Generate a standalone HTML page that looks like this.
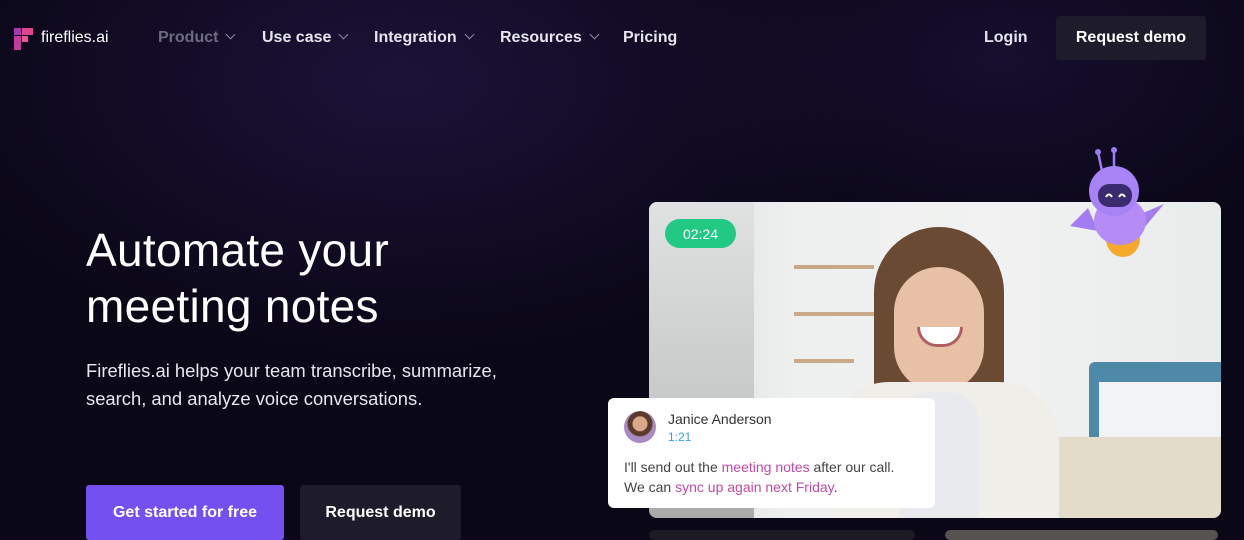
<!DOCTYPE html>
<html><head><meta charset="utf-8"><style>
*{margin:0;padding:0;box-sizing:border-box}
body{width:1244px;height:537px;overflow:hidden;background:#0c0818;font-family:"Liberation Sans",sans-serif;position:relative}
.bg{position:absolute;inset:0;background:radial-gradient(ellipse 700px 400px at 400px 80px,#1c1238 0%,rgba(20,12,40,0) 70%),radial-gradient(ellipse 500px 300px at 1000px 60px,#160e2e 0%,rgba(0,0,0,0) 70%),#0a0716}
.nav{position:absolute;top:0;left:0;right:0;height:76px}
.nav span{position:absolute;top:29px;font-size:16px;color:#e6e4ee;font-weight:bold}
.chev{display:inline-block;width:7px;height:7px;border-right:1.3px solid #8d8a9e;border-bottom:1.3px solid #8d8a9e;transform:rotate(45deg);margin-left:9px;position:relative;top:-4px}
.btn{position:absolute;display:flex;align-items:center;justify-content:center;color:#fff;font-size:16px;font-weight:bold}
.photo{position:absolute;left:649px;top:202px;width:572px;height:316px;border-radius:8px;overflow:hidden;background:linear-gradient(90deg,#d9dcdc 0%,#eef0ef 25%,#f1f2f1 60%,#e9ecec 100%)}
</style></head><body>
<div class="bg"></div>
<div class="nav">
<svg style="position:absolute;left:14px;top:28px" width="20" height="22" viewBox="0 0 20 22"><rect x="0" y="0" width="7" height="7" fill="#a53ab0"/><rect x="8" y="0" width="11" height="7" fill="#e0448a"/><rect x="0" y="8" width="7" height="14" fill="#c23b9e"/><rect x="8" y="8" width="6" height="6" fill="#f0508e"/></svg>
<span style="left:41px;font-weight:normal;color:#fff;font-size:16px">fireflies.ai</span>
<span style="left:158px;color:#6e6a80">Product<i class="chev"></i></span>
<span style="left:262px">Use case<i class="chev"></i></span>
<span style="left:374px">Integration<i class="chev"></i></span>
<span style="left:500px">Resources<i class="chev"></i></span>
<span style="left:623px">Pricing</span>
<span style="left:984px">Login</span>
</div>
<div class="btn" style="left:1056px;top:16px;width:150px;height:44px;background:#1e1b2b;border-radius:3px">Request demo</div>
<div style="position:absolute;left:86px;top:222px;color:#fff;font-size:46px;line-height:56px;letter-spacing:0.3px">Automate your<br>meeting notes</div>
<div style="position:absolute;left:86px;top:357px;color:#e8e6ef;font-size:18.4px;line-height:28px">Fireflies.ai helps your team transcribe, summarize,<br>search, and analyze voice conversations.</div>
<div class="btn" style="left:86px;top:485px;width:198px;height:55px;background:#7450f0;border-radius:3px">Get started for free</div>
<div class="btn" style="left:300px;top:485px;width:161px;height:55px;background:#1e1b2b;border-radius:3px">Request demo</div>

<div class="photo">
 <div style="position:absolute;left:0;top:0;width:105px;height:316px;background:linear-gradient(180deg,#e0e2e2,#c9cbcb 60%,#a8a9a6)"></div>
 <div style="position:absolute;left:145px;top:63px;width:80px;height:4px;background:#c8aa88"></div>
 <div style="position:absolute;left:145px;top:110px;width:80px;height:4px;background:#c8aa88"></div>
 <div style="position:absolute;left:145px;top:157px;width:60px;height:4px;background:#c8aa88"></div>
 <div style="position:absolute;left:440px;top:160px;width:132px;height:110px;background:#4e8aa8;border-radius:6px 0 0 0"></div>
 <div style="position:absolute;left:450px;top:180px;width:122px;height:60px;background:#f2f3f4"></div>
 <div style="position:absolute;left:400px;top:235px;width:172px;height:81px;background:#e4dccb"></div>
 <div style="position:absolute;left:225px;top:25px;width:130px;height:220px;background:#6b4a33;border-radius:65px 65px 20px 20px"></div>
 <div style="position:absolute;left:245px;top:65px;width:90px;height:125px;background:#e8c0a6;border-radius:45px"></div>
 <div style="position:absolute;left:268px;top:125px;width:46px;height:20px;background:#fff;border-radius:0 0 23px 23px;border:3px solid #b06060;border-top:none"></div>
 <div style="position:absolute;left:180px;top:180px;width:230px;height:140px;background:#f0eee9;border-radius:60px 60px 0 0"></div>
 <div style="position:absolute;left:250px;top:190px;width:80px;height:130px;background:#e8eaee;border-radius:30px 30px 0 0"></div>
</div>
<div style="position:absolute;left:665px;top:219px;width:71px;height:29px;border-radius:15px;background:#22c985;color:#fff;font-size:14px;display:flex;align-items:center;justify-content:center">02:24</div>
<svg style="position:absolute;left:1068px;top:146px" width="100" height="112" viewBox="0 0 100 112">
<line x1="30" y1="6" x2="34" y2="25" stroke="#9b7cf2" stroke-width="2.5"/><line x1="46" y1="4" x2="46" y2="24" stroke="#9b7cf2" stroke-width="2.5"/>
<circle cx="30" cy="6" r="3" fill="#9b7cf2"/><circle cx="46" cy="4" r="3" fill="#9b7cf2"/>
<path d="M2 80 L20 62 L30 85Z" fill="#a27cf0"/><path d="M96 58 L76 82 L68 70Z" fill="#a27cf0"/>
<ellipse cx="55" cy="93" rx="17" ry="18" fill="#f6a82c"/>
<ellipse cx="52" cy="75" rx="26" ry="24" fill="#b58cf5"/>
<circle cx="46" cy="45" r="25" fill="#a883f5"/>
<rect x="30" y="38" width="34" height="23" rx="11" fill="#3a2a70"/>
<path d="M38 51 q3 -5 6 0 M51 51 q3 -5 6 0" stroke="#fff" stroke-width="2" fill="none"/>
</svg>
<div style="position:absolute;left:608px;top:398px;width:327px;height:110px;background:#fff;border-radius:6px">
 <div style="position:absolute;left:16px;top:13px;width:32px;height:32px;border-radius:50%;background:radial-gradient(circle at 50% 40%,#d9a98a 0 7px,#5b3a2a 8px 12px,#a88bc4 13px)"></div>
 <div style="position:absolute;left:60px;top:13px;font-size:14px;color:#333">Janice Anderson</div>
 <div style="position:absolute;left:60px;top:32px;font-size:12px;color:#3a9ee8">1:21</div>
 <div style="position:absolute;left:16px;top:59px;font-size:14px;line-height:20px;color:#444">I'll send out the <span style="color:#c04aa8">meeting notes</span> after our call.<br>We can <span style="color:#c04aa8">sync up again next Friday</span>.</div>
</div>
<div style="position:absolute;left:649px;top:530px;width:266px;height:10px;background:#1c1a22;border-radius:6px"></div>
<div style="position:absolute;left:945px;top:530px;width:273px;height:10px;background:#55524f;border-radius:6px"></div>
</body></html>
